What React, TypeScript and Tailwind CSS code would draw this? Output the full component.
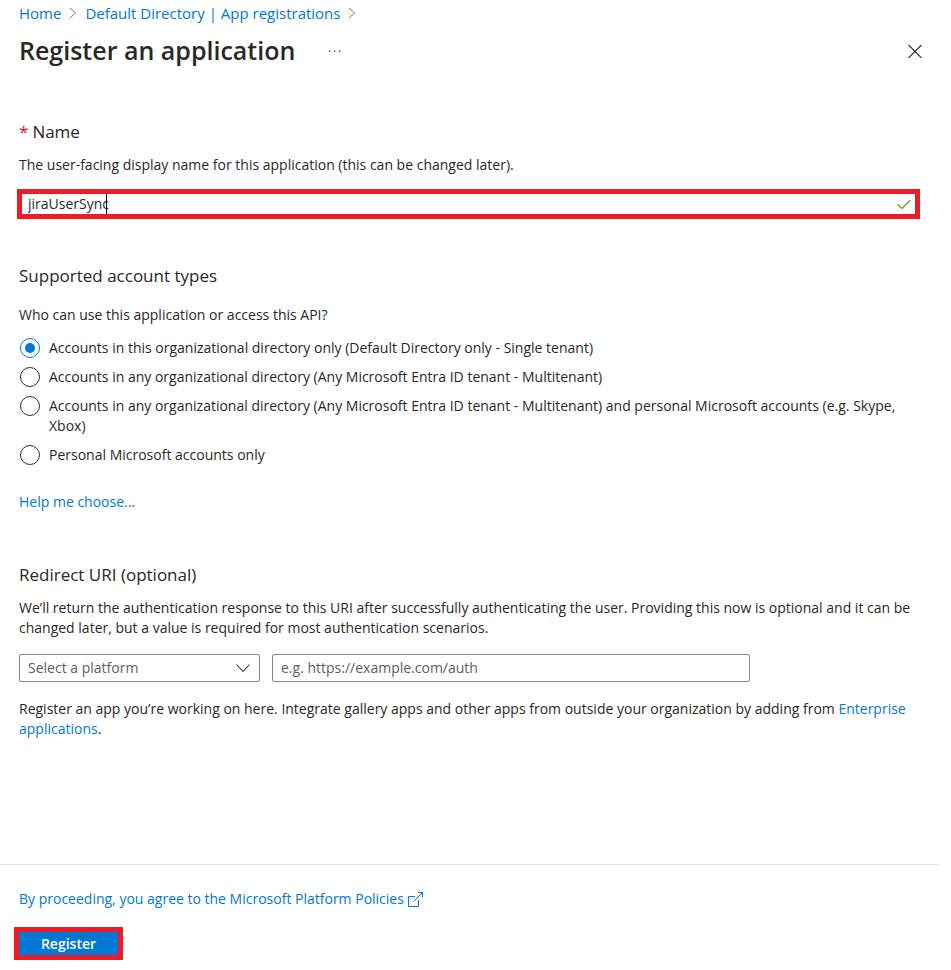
import React, { useState } from 'react';

const accountTypes = [
  { id: 'single', label: 'Accounts in this organizational directory only (Default Directory only - Single tenant)' },
  { id: 'multi', label: 'Accounts in any organizational directory (Any Microsoft Entra ID tenant - Multitenant)' },
  {
    id: 'multi-personal',
    label:
      'Accounts in any organizational directory (Any Microsoft Entra ID tenant - Multitenant) and personal Microsoft accounts (e.g. Skype, Xbox)',
  },
  { id: 'personal', label: 'Personal Microsoft accounts only' },
];

function BreadcrumbArrow() {
  return (
    <svg className="h-3 w-2" viewBox="0 0 8 12" fill="none" stroke="#7a7876" strokeWidth="1" aria-hidden="true">
      <path d="M1 1l5.5 5L1 11" />
    </svg>
  );
}

function Header() {
  return (
    <header className="pl-[19px] pr-7 pt-[3px]">
      <nav aria-label="Breadcrumb" className="flex h-5 items-center gap-2 text-[15px] text-[#0078d4]">
        <a href="#home">Home</a>
        <BreadcrumbArrow />
        <a href="#registrations">Default Directory | App registrations</a>
        <BreadcrumbArrow />
      </nav>

      <div className="mt-[11px] flex h-8 items-center">
        <h1 className="text-[25px] font-semibold">Register an application</h1>
        <button type="button" aria-label="More" className="ml-8">
          <svg className="h-4 w-4" viewBox="0 0 16 16" fill="#484644">
            <rect x="2" y="8.5" width="1.4" height="1.4" />
            <rect x="7" y="8.5" width="1.4" height="1.4" />
            <rect x="12" y="8.5" width="1.4" height="1.4" />
          </svg>
        </button>
        <button type="button" aria-label="Close" className="ml-auto">
          <svg className="h-4 w-4" viewBox="0 0 16 16" fill="none" stroke="#323130" strokeWidth="1.1">
            <path d="M1.5 3l13 13M14.5 3l-13 13" />
          </svg>
        </button>
      </div>
    </header>
  );
}

export default function App() {
  const [name, setName] = useState('jiraUserSync');
  const [accountType, setAccountType] = useState('single');
  const [platform, setPlatform] = useState('');
  const [redirectUri, setRedirectUri] = useState('');

  return (
    <div className="flex min-h-screen flex-col bg-white font-['Open_Sans','Noto_Sans',sans-serif] text-sm leading-5 text-[#292827]">
      <Header />

      <form id="register-form" onSubmit={(e) => e.preventDefault()} className="grow pb-10 pl-[19px] pr-[31px] pt-[54px]">
        {/* Name */}
        <section>
          <label htmlFor="app-name" className="flex gap-1 text-[17px] leading-6">
            <span className="text-[#e00b1c]">*</span>
            Name
          </label>
          <p className="mt-[11px]">The user-facing display name for this application (this can be changed later).</p>
          <div className="relative -ml-0.5 mt-3.5 flex h-[30px] items-center border-5 border-[#ed1c24]">
            <input
              id="app-name"
              type="text"
              value={name}
              onChange={(e) => setName(e.target.value)}
              className="h-5 min-w-0 grow pl-1.5 outline-none"
            />
            {/* Text cursor */}
            <span className="absolute left-[84px] top-0 h-5 w-px bg-black" />
            <svg className="mr-1 h-4 w-4 shrink-0" viewBox="0 0 16 16" fill="none" stroke="#57a300" strokeWidth="1.2" aria-hidden="true">
              <path d="M2.5 8.5l4.500 4L15.500 4" />
            </svg>
          </div>
        </section>

        {/* Supported account types */}
        <section className="mt-[45px]">
          <h2 className="text-[17px] leading-6">Supported account types</h2>
          <fieldset className="mt-[17px]">
            <legend>Who can use this application or access this API?</legend>
            <div className="mt-[13px] flex flex-col gap-[9px]">
              {accountTypes.map((type) => (
                <label key={type.id} className="flex items-start gap-[9px]">
                  <input
                    type="radio"
                    name="account-type"
                    value={type.id}
                    checked={accountType === type.id}
                    onChange={() => setAccountType(type.id)}
                    className="ml-px flex size-5 shrink-0 appearance-none items-center justify-center rounded-full border border-[#323130] before:size-2.5 before:rounded-full checked:border-[#0078d4] checked:before:bg-[#0078d4]"
                  />
                  <span>{type.label}</span>
                </label>
              ))}
            </div>
          </fieldset>
          <a href="#help" className="mt-[27px] inline-block text-[#0078d4]">
            Help me choose...
          </a>
        </section>

        {/* Redirect URI */}
        <section className="mt-[51px]">
          <h2 className="text-[17px] leading-6">Redirect URI (optional)</h2>
          <p className="mt-[11px]">
            We’ll return the authentication response to this URI after successfully authenticating the user. Providing
            this now is optional and it can be changed later, but a value is required for most authentication scenarios.
          </p>
          <div className="mt-4 flex gap-3">
            <div className="relative w-[241px]">
              <select
                aria-label="Platform"
                value={platform}
                onChange={(e) => setPlatform(e.target.value)}
                className="h-7 w-full appearance-none rounded-xs border border-[#8a8886] bg-white pl-2 pr-8 text-[#605e5c]"
              >
                <option value="">Select a platform</option>
                <option value="web">Web</option>
                <option value="spa">Single-page application (SPA)</option>
              </select>
              <svg
                className="pointer-events-none absolute right-2 top-1.5 h-4 w-4"
                viewBox="0 0 16 16"
                fill="none"
                stroke="#323130"
                strokeWidth="1.1"
                aria-hidden="true"
              >
                <path d="M0.500 4.500l6.500 7 6.500-7" />
              </svg>
            </div>
            <input
              type="text"
              aria-label="Redirect URI"
              placeholder="e.g. https://example.com/auth"
              value={redirectUri}
              onChange={(e) => setRedirectUri(e.target.value)}
              className="h-7 w-[478px] rounded-xs border border-[#8a8886] px-2 pb-0.5 placeholder:text-[#605e5c]"
            />
          </div>
          <p className="mt-[17px]">
            Register an app you’re working on here. Integrate gallery apps and other apps from outside your organization
            by adding from{' '}
            <a href="#enterprise" className="text-[#0078d4]">
              Enterprise applications
            </a>
            .
          </p>
        </section>
      </form>

      <footer className="mr-3 border-t border-[#dddddd] pb-[15px] pl-[19px] pt-6">
        <a href="#policies" className="flex w-fit items-center gap-1 text-[#0078d4]">
          By proceeding, you agree to the Microsoft Platform Policies
          <svg className="h-4 w-4" viewBox="0 0 16 16" fill="none" stroke="currentColor" strokeWidth="1" aria-hidden="true">
            <path d="M7 5.500H0.500v10h10V9M10 1.500h4.500V6M14.500 1.500L5.500 10.500" />
          </svg>
        </a>
        <button
          type="submit"
          form="register-form"
          className="mt-[23px] block h-[23px] w-[99px] bg-[#0078d4] font-semibold text-white outline-5 outline-[#ed1c24]"
        >
          Register
        </button>
      </footer>
    </div>
  );
}
